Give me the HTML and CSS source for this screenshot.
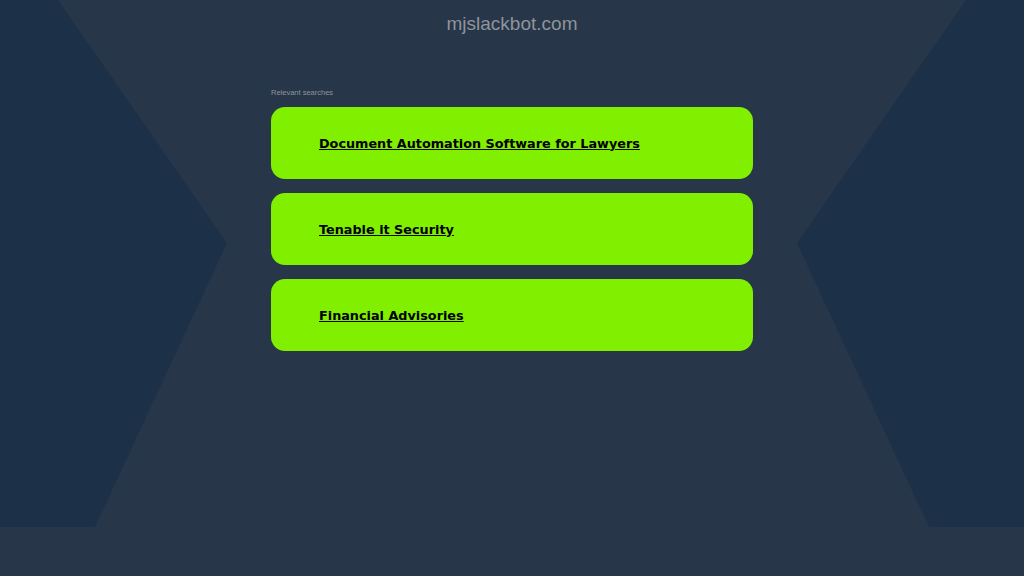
FILE: index.html
```html
<!DOCTYPE html>
<html lang="en">
<head>
  <meta charset="UTF-8" />
  <meta name="viewport" content="width=device-width, initial-scale=1.0" />
  <title>mjslackbot.com</title>
  <link rel="stylesheet" href="styles.css">
</head>
<body>
  <svg class="backdrop" width="1024" height="527" viewBox="0 0 1024 527" aria-hidden="true">
    <polygon points="0,0 58,0 227,243 95,527 0,527" />
    <polygon points="1024,0 966,0 797,243 929,527 1024,527" />
  </svg>

  <div class="page">
    <h1 class="domain">mjslackbot.com</h1>

    <div class="searches">
      <p class="caption">Relevant searches</p>
      <div class="card"><a href="#">Document Automation Software for Lawyers</a></div>
      <div class="card"><a href="#">Tenable it Security</a></div>
      <div class="card"><a href="#">Financial Advisories</a></div>
    </div>
  </div>
</body>
</html>
```

FILE: styles.css
```css
html, body { margin: 0; height: 100%; }
body { background: #273648; font-family: 'Liberation Sans', Arial, sans-serif; overflow: hidden; }
.backdrop { position: absolute; left: 0; top: 0; z-index: 0; }
.backdrop polygon { fill: #1c3148; }
.page { position: relative; z-index: 1; }
.domain {
  margin: 0; padding-top: 12px; text-align: center;
  font-weight: normal; font-size: 19px; line-height: 24px; color: #8e949b;
}
.searches { width: 482px; margin: 52px auto 0; display: flex; flex-direction: column; gap: 14px; }
.caption { margin: 0 0 -4px; font-size: 7.5px; line-height: 9px; color: #8e949b; }
.card {
  height: 72px; background: #80f000; border-radius: 14px;
  display: flex; align-items: center; padding-left: 48px;
}
.card a {
  font-family: 'DejaVu Sans', Verdana, sans-serif; font-weight: bold; font-size: 12.8px;
  color: #000; text-decoration: underline;
}
```
